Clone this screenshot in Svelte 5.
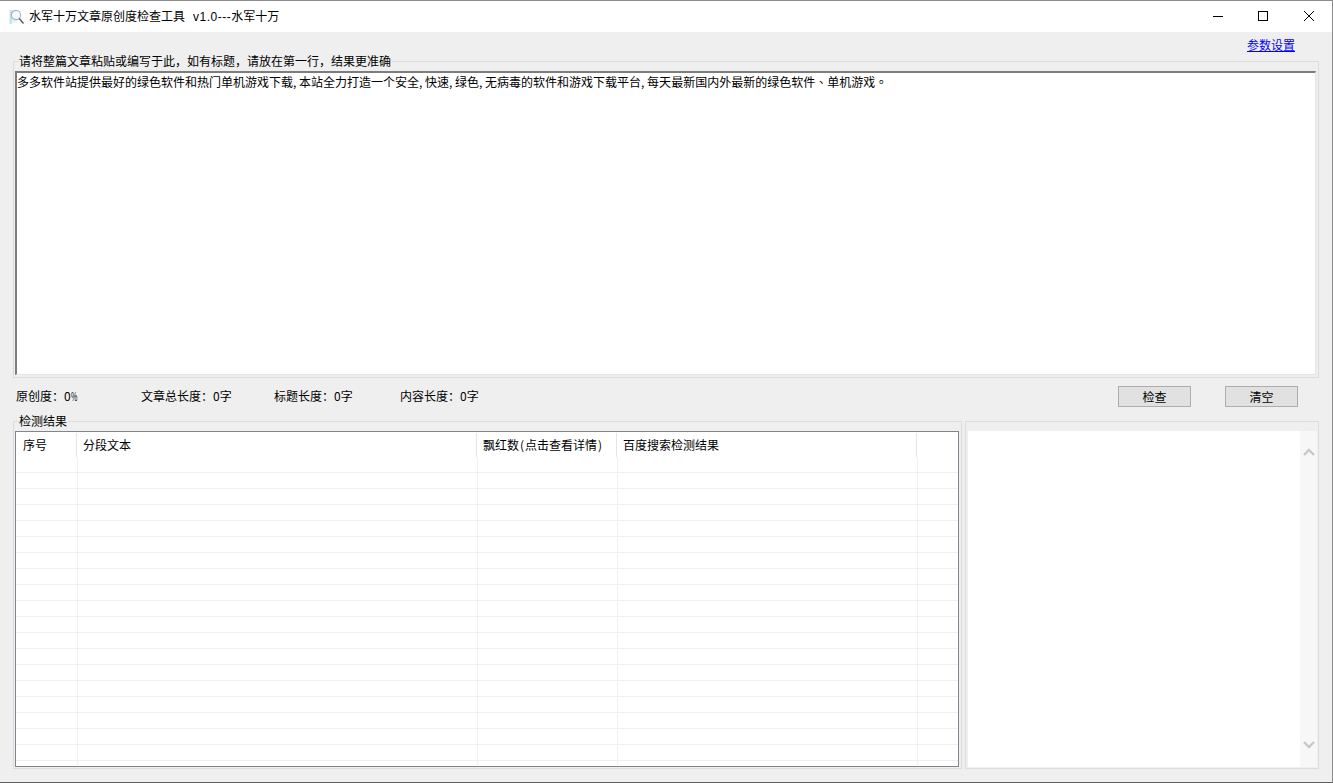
<script>
  const cols = [
    { label: '序号', w: 61 },
    { label: '分段文本', w: 400 },
    { label: '', w: 140, parts: ['飘红数', '点击查看详情'] },
    { label: '百度搜索检测结果', w: 300 },
    { label: '', w: 40 }
  ];
  const rowWidths = [62, 400, 140, 300, 40];
  const rows = Array.from({ length: 20 }, (_, i) => i);
</script>

<div class="window">
  <header class="titlebar">
    <svg class="appicon" width="16" height="16" viewBox="0 0 16 16" aria-hidden="true">
      <rect x="0.5" y="1" width="2.5" height="14" fill="#bfe6ee" />
      <rect x="3" y="1" width="5" height="13" fill="#e8f4f7" />
      <circle cx="7" cy="6" r="4.6" fill="#f7fafb" stroke="#a9b3bb" stroke-width="1.2" />
      <path d="M10.3 9.6l4.2 4.9" stroke="#56606a" stroke-width="1.5" />
    </svg>
    <span class="title">水军十万文章原创度检查工具<span class="latin">v1.0---</span>水军十万</span>
    <div class="winbtns">
      <svg width="12" height="12" viewBox="0 0 12 12"><path d="M2 6.5h10" stroke="#000" /></svg>
      <svg width="12" height="12" viewBox="0 0 12 12"><rect x="1.5" y="1.5" width="9" height="9" fill="none" stroke="#000" /></svg>
      <svg width="12" height="12" viewBox="0 0 12 12"><path d="M1 1l10 10M11 1L1 11" stroke="#000" /></svg>
    </div>
  </header>

  <main class="body">
    <div class="linkrow"><a href="#settings">参数设置</a></div>

    <fieldset class="group top">
      <legend>请将整篇文章粘贴或编写于此，如有标题，请放在第一行，结果更准确</legend>
      <div class="editor">多多软件站提供最好的绿色软件和热门单机游戏下载, 本站全力打造一个安全, 快速, 绿色, 无病毒的软件和游戏下载平台, 每天最新国内外最新的绿色软件<span class="tc">、</span>单机游戏<span class="tc">。</span></div>
    </fieldset>

    <div class="status">
      <span class="s1">原创度：0<span class="pct">%</span></span>
      <span class="s2">文章总长度：0字</span>
      <span class="s3">标题长度：0字</span>
      <span class="s4">内容长度：0字</span>
      <div class="buttons">
        <button>检查</button>
        <button>清空</button>
      </div>
    </div>

    <div class="bottom">
      <fieldset class="group results">
        <legend>检测结果</legend>
        <div class="table">
          <div class="thead">
            {#each cols as c}
              <div class="th" style="width:{c.w}px">
                {#if c.parts}{c.parts[0]}<span class="paren">(</span>{c.parts[1]}<span class="paren">)</span>{:else}{c.label}{/if}
              </div>
            {/each}
          </div>
          <div class="tbody">
            {#each rows as r}
              <div class="tr">
                {#each rowWidths as w}
                  <div class="td" style="width:{w}px"></div>
                {/each}
              </div>
            {/each}
          </div>
        </div>
      </fieldset>

      <fieldset class="group detail">
        <div class="pane">
          <div class="blank"></div>
          <div class="scroll">
            <svg width="12" height="8" viewBox="0 0 12 8"><path d="M1 7l5-5 5 5" fill="none" stroke="#c8c8c8" stroke-width="2.4" /></svg>
            <svg width="12" height="8" viewBox="0 0 12 8"><path d="M1 1l5 5 5-5" fill="none" stroke="#c8c8c8" stroke-width="2.4" /></svg>
          </div>
        </div>
      </fieldset>
    </div>
  </main>
</div>

<style>
  :global(body) {
    margin: 0;
    background: #f0f0f0;
    font-family: "Noto Sans CJK SC", "Liberation Sans", sans-serif;
    font-size: 12px;
    color: #000;
  }
  .window {
    width: 1333px;
    height: 783px;
    box-sizing: border-box;
    border-top: 1px solid #8c8c8c;
    border-right: 1px solid #8c8c8c;
    border-bottom: 1px solid #5f5f5f;
    display: flex;
    flex-direction: column;
    overflow: hidden;
  }
  .titlebar {
    height: 31px;
    flex: none;
    background: #fff;
    display: flex;
    align-items: center;
    padding-left: 9px;
  }
  .appicon { flex: none; margin-right: 4px; }
  .title { line-height: 31px; white-space: pre; }
  .latin {
    font-family: "Liberation Sans", sans-serif;
    letter-spacing: 0.5px;
    margin-left: 8px;
  }
  .tc { font-family: "Noto Sans CJK TC", sans-serif; }
  .pct {
    display: inline-block;
    width: 6px;
    transform: scaleX(0.58);
    transform-origin: left center;
  }
  .winbtns {
    margin-left: auto;
    display: flex;
    gap: 34px;
    padding-right: 17px;
    padding-bottom: 2px;
  }
  .body {
    flex: 1;
    min-height: 0;
    display: flex;
    flex-direction: column;
    padding: 0 13px 0 13px;
    background: #efefef;
  }
  .linkrow {
    height: 21px;
    flex: none;
    display: flex;
    justify-content: flex-end;
    align-items: flex-start;
    padding: 5px 24px 0 0;
    box-sizing: border-box;
  }
  .linkrow a { color: #0000ff; text-decoration: underline; line-height: 16px; }
  .group {
    margin: 0;
    padding: 0;
    min-width: 0;
    border: 1px solid #dcdcdc;
    box-sizing: border-box;
  }
  legend {
    padding: 0 1px 0 0;
    margin-left: 4px;
    line-height: 16px;
    white-space: nowrap;
  }
  .top {
    height: 325px;
    flex: none;
    padding: 2px 2px 2px 1px;
    display: flex;
  }
  .editor {
    flex: 1;
    background: #fff;
    border-top: 2px solid #7d7d7d;
    border-left: 2px solid #7d7d7d;
    border-right: 1px solid #e4e4e4;
    border-bottom: 1px solid #e4e4e4;
    line-height: 18px;
    white-space: nowrap;
    overflow: hidden;
    height: 304px;
    box-sizing: border-box;
  }
  .status {
    height: 35px;
    flex: none;
    display: flex;
    align-items: center;
    padding-left: 3px;
    box-sizing: border-box;
  }
  .s1 { width: 125px; }
  .s2 { width: 133px; }
  .s3 { width: 126px; }
  .s4 { width: 100px; }
  .buttons {
    margin-left: auto;
    display: flex;
    gap: 34px;
    padding-right: 21px;
    margin-top: 2px;
  }
  button {
    width: 73px;
    height: 21px;
    background: #e1e1e1;
    border: 1px solid #adadad;
    padding: 0;
    font: inherit;
    line-height: 19px;
    color: #000;
  }
  .bottom {
    display: flex;
    gap: 3px;
    flex: none;
    height: 356px;
  }
  .results {
    width: 949px;
    flex: none;
    padding: 2px 1px 1px 1px;
    height: 356px;
  }
  .table {
    width: 944px;
    height: 336px;
    background: #fff;
    box-sizing: border-box;
    border: 1px solid #80848c;
    overflow: hidden;
  }
  .thead {
    display: flex;
    height: 25px;
    padding-top: 1px;
    box-sizing: border-box;
  }
  .th {
    flex: none;
    box-sizing: border-box;
    border-right: 1px solid #e5e5e5;
    padding: 1px 0 0 6px;
    line-height: 22px;
    white-space: nowrap;
  }
  .th:first-child { padding-left: 7px; }
  .th:last-child { border-right: none; }
  .paren { padding: 0 1px; }
  .tbody {
    height: 308px;
    overflow: hidden;
  }
  .tr {
    display: flex;
    height: 16px;
    box-sizing: border-box;
    border-bottom: 1px solid #efefef;
  }
  .td {
    flex: none;
    box-sizing: border-box;
    border-right: 1px solid #efefef;
  }
  .td:last-child { border-right: none; }
  .detail {
    flex: 1;
    margin-top: 8px;
    height: 348px;
    padding: 9px 1px 1px 2px;
  }
  .pane {
    display: flex;
    height: 336px;
    background: #fff;
  }
  .blank { flex: 1; }
  .scroll {
    width: 17px;
    background: #f7f7f7;
    display: flex;
    flex-direction: column;
    justify-content: space-between;
    align-items: center;
    padding: 17px 0 18px;
    box-sizing: border-box;
  }
</style>
